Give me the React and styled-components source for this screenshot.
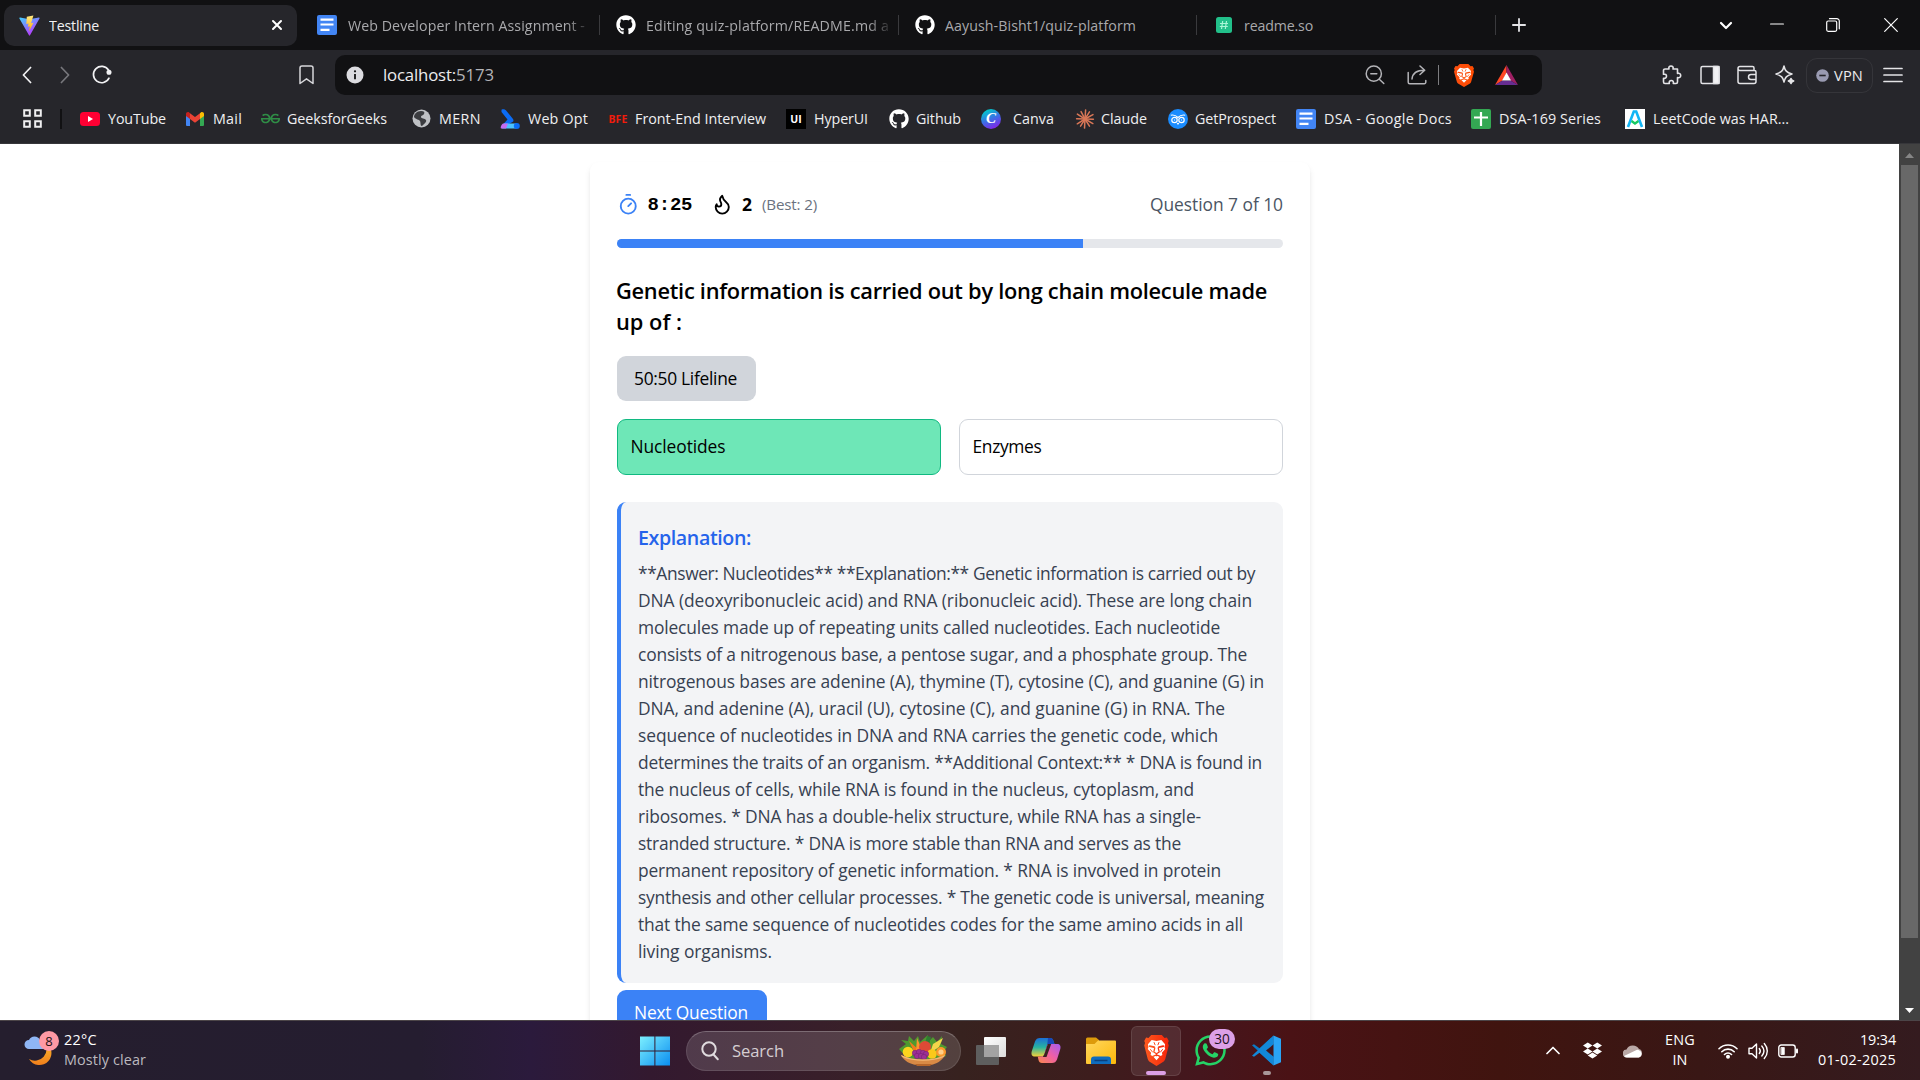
import React, { useLayoutEffect, useRef } from 'react';
import styled, { createGlobalStyle } from 'styled-components';
import { FaGithub, FaDropbox, FaWhatsapp } from 'react-icons/fa';
import { SiGeeksforgeeks } from 'react-icons/si';

const Global = createGlobalStyle`
  *, *::before, *::after { box-sizing: border-box; }
  html, body { margin: 0; padding: 0; overflow: hidden; }
  body { font-family: "Open Sans", "Noto Sans", sans-serif; background: #fff; }
  button { font: inherit; border: 0; cursor: pointer; }
  svg { display: block; flex: none; }
`;

/* ---------- text of a known width ---------- */

const FitBox = styled.span`
  display: block;
  flex: none;
  white-space: nowrap;
`;
const FitInner = styled.span`
  display: inline-block;
  white-space: pre;
`;

function Fit({ w, children }) {
  const box = useRef(null);
  const inner = useRef(null);
  useLayoutEffect(() => {
    const el = inner.current;
    el.style.letterSpacing = '0px';
    const natural = el.getBoundingClientRect().width;
    const n = Math.max(1, el.textContent.length);
    el.style.letterSpacing = `${(w - natural) / n}px`;
    box.current.style.width = `${w}px`;
  }, [w, children]);
  return (
    <FitBox ref={box}>
      <FitInner ref={inner}>{children}</FitInner>
    </FitBox>
  );
}

/* ---------- frame ---------- */

const Screen = styled.div`
  width: 1920px;
  height: 1080px;
  display: flex;
  flex-direction: column;
  overflow: hidden;
`;

/* ---------- tab strip ---------- */

const TabStrip = styled.div`
  height: 50px;
  background: #111113;
  display: flex;
  align-items: center;
  flex: none;
`;
const Tab = styled.div`
  width: ${(p) => p.$w}px;
  margin-left: ${(p) => p.$ml || 0}px;
  height: 41px;
  padding-left: ${(p) => p.$pl}px;
  display: flex;
  align-items: center;
  flex: none;
  border-radius: 10px;
  background: ${(p) => (p.$active ? '#26262b' : 'transparent')};
  color: ${(p) => (p.$active ? '#f1f1f3' : '#a9a9ac')};
  font-size: 14.2px;
`;
const TabTitle = styled.div`
  margin-left: ${(p) => p.$ml}px;
  width: ${(p) => p.$w}px;
  overflow: hidden;
  flex: none;
  ${(p) => p.$fade && 'mask-image: linear-gradient(90deg, #000 91%, rgba(0, 0, 0, 0.15) 100%);'}
`;
const TabClose = styled.div`
  margin-left: auto;
  margin-right: 14px;
`;
const TabDivider = styled.div`
  width: 1px;
  height: 20px;
  background: #3a3a3d;
  flex: none;
`;
const NewTab = styled.div`
  width: 46px;
  display: grid;
  place-items: center;
`;
const WindowButtons = styled.div`
  margin-left: auto;
  display: flex;
  align-items: center;
`;
const WindowButton = styled.div`
  width: ${(p) => p.$w}px;
  height: 48px;
  display: grid;
  place-items: center;
`;

/* ---------- toolbar ---------- */

const Toolbar = styled.div`
  height: 50px;
  background: #26262b;
  display: flex;
  align-items: center;
  flex: none;
`;
const Tool = styled.div`
  width: ${(p) => p.$w}px;
  margin-left: ${(p) => p.$ml || 0}px;
  height: 40px;
  display: grid;
  place-items: center;
  flex: none;
`;
const UrlBar = styled.div`
  width: 1207px;
  height: 40px;
  margin-left: 9px;
  border-radius: 10px;
  background: #111113;
  color: #ececee;
  font-size: 16.8px;
  display: flex;
  align-items: center;
  padding-left: 11px;
  flex: none;
`;
const UrlText = styled.div`
  display: flex;
  margin-left: 19px;
  padding-bottom: 1px;
`;
const Port = styled.span`
  color: #b4b4b8;
`;
const UrlDivider = styled.div`
  width: 1px;
  height: 20px;
  background: #7d7d80;
`;
const VpnButton = styled.div`
  width: 67px;
  height: 35px;
  margin-left: 3px;
  border: 1px solid #35353a;
  border-radius: 11px;
  display: flex;
  align-items: center;
  padding-left: 9px;
  gap: 5px;
  color: #ececee;
  font-size: 14.6px;
  flex: none;
`;

/* ---------- bookmarks ---------- */

const BookmarkBar = styled.div`
  height: 44px;
  background: #26262b;
  border-bottom: 1px solid #36363a;
  display: flex;
  align-items: center;
  padding: 0 0 6px 23px;
  flex: none;
  color: #efeff1;
  font-size: 14.3px;
`;
const BarDivider = styled.div`
  width: 2px;
  height: 20px;
  margin-left: 18px;
  background: #111113;
`;
const Bookmark = styled.div`
  display: flex;
  align-items: center;
  margin-left: ${(p) => p.$ml}px;
  gap: ${(p) => p.$gap}px;
  flex: none;
`;
const Glyph = styled.div`
  width: ${(p) => p.$w}px;
  height: 20px;
  display: grid;
  place-items: center;
  flex: none;
`;
const BfeMark = styled.span`
  color: #f01c0c;
  font: 700 10.5px/20px "Noto Sans", sans-serif;
`;
const UiMark = styled.span`
  width: 20px;
  height: 20px;
  background: #000;
  color: #fff;
  font-size: 10.5px;
  font-weight: 700;
  line-height: 20px;
  text-align: center;
`;
const CanvaMark = styled.span`
  width: 20px;
  height: 20px;
  border-radius: 50%;
  background: linear-gradient(155deg, #05c3cc 15%, #3b6fe6 50%, #7d2ae8 85%);
  color: #fff;
  font: italic 700 15px/19px "Liberation Serif", serif;
  text-align: center;
`;

/* ---------- page ---------- */

const Page = styled.div`
  height: 876px;
  display: flex;
  background: #fff;
  overflow: hidden;
  flex: none;
`;
const Viewport = styled.main`
  flex: 1;
  display: flex;
  justify-content: center;
  align-items: flex-start;
  padding-top: 18px;
  overflow: hidden;
`;
const Card = styled.section`
  width: 720px;
  height: 940px;
  flex: none;
  margin-left: 1px;
  padding: 27px;
  border-radius: 9px;
  background: #fff;
  box-shadow: 0 4.5px 7px -1px rgba(0, 0, 0, 0.1), 0 2px 4.5px -2px rgba(0, 0, 0, 0.1);
  color: #000;
  font-size: 17.4px;
  line-height: 27px;
`;
const StatusRow = styled.div`
  height: 31px;
  display: flex;
  align-items: center;
  color: #4b5563;
`;
const Timer = styled.span`
  margin-left: 8px;
  width: 45px;
  padding-top: 2px;
  color: #000;
  font: 700 19px/27px "Liberation Mono", monospace;
  letter-spacing: -0.2px;
`;
const FlameSlot = styled.div`
  margin-left: 18px;
`;
const Streak = styled.span`
  margin-left: 9px;
  width: 20px;
  color: #000;
  font-weight: 700;
  font-size: 17.5px;
`;
const Best = styled.div`
  color: #6b7280;
  font-size: 15.2px;
`;
const Count = styled.div`
  margin-left: auto;
`;
const Track = styled.div`
  margin-top: 19px;
  height: 9px;
  border-radius: 5px;
  background: #e5e7eb;
  overflow: hidden;
`;
const Fill = styled.div`
  width: 70%;
  height: 100%;
  background: #3b82f6;
`;
const Question = styled.h2`
  margin: 27px 0 19px -1px;
  font-size: 21.8px;
  line-height: 31px;
  font-weight: 600;
`;
const Lifeline = styled.button`
  display: block;
  height: 45px;
  padding: 0 19px 0 17px;
  border-radius: 9px;
  background: #d1d5db;
  color: #000;
`;
const Options = styled.div`
  margin-top: 18px;
  display: grid;
  grid-template-columns: 1fr 1fr;
  gap: 18px;
`;
const Option = styled.div`
  height: 56px;
  padding: 12.5px 12.5px;
  border-radius: 9px;
  border: 1px solid ${(p) => (p.$correct ? '#10b981' : '#d1d5db')};
  background: ${(p) => (p.$correct ? '#6ee7b7' : '#fff')};
`;
const Explanation = styled.div`
  margin-top: 27px;
  height: 481px;
  padding: 19px 17px;
  border-left: 4px solid #3b82f6;
  border-radius: 9px;
  background: #f3f4f6;
  color: #374151;
`;
const ExplanationTitle = styled.h3`
  margin: 0 0 6px;
  padding-top: 1px;
  color: #2563eb;
  font-size: 19.6px;
  line-height: 31.5px;
  font-weight: 600;
`;
const NextButton = styled.button`
  display: block;
  margin-top: 7px;
  width: 150px;
  height: 45px;
  padding: 0 0 0 17px;
  text-align: left;
  border-radius: 9px;
  background: #3b82f6;
  color: #fff;
  font-weight: 500;
`;

const Scrollbar = styled.div`
  width: 21px;
  background: #424242;
  display: flex;
  flex-direction: column;
  align-items: center;
  padding: 9px 0 7px;
  justify-content: space-between;
`;
const Thumb = styled.div`
  width: 17px;
  height: 773px;
  background: #686868;
  margin: 7px 0 auto;
`;

/* ---------- taskbar ---------- */

const Taskbar = styled.div`
  height: 60px;
  border-top: 1px solid #4c4548;
  display: flex;
  align-items: center;
  flex: none;
  color: #fff;
  font-size: 14.4px;
  line-height: 20px;
  background: linear-gradient(
    90deg,
    #251e2e 0,
    #251d30 420px,
    #2b1a3c 530px,
    #33192f 650px,
    #392029 850px,
    #37221f 960px,
    #3d1d1d 1090px,
    #45161d 1200px,
    #4a1215 1290px,
    #40140f 1500px,
    #391715 1700px,
    #341b1f 1920px
  );
`;
const Weather = styled.div`
  position: relative;
  width: 31px;
  height: 37px;
  margin-left: 24px;
  margin-bottom: 3px;
`;
const WeatherBadge = styled.span`
  position: absolute;
  right: -4px;
  top: 0;
  width: 20px;
  height: 20px;
  border-radius: 50%;
  background: #ff99a4;
  color: #1b1113;
  font-size: 13px;
  text-align: center;
`;
const WeatherText = styled.div`
  margin-left: 9px;
  width: 90px;
  padding-bottom: 2px;
`;
const Muted = styled.div`
  color: #bcb9bf;
`;
const Slot = styled.div`
  width: ${(p) => p.$w}px;
  height: ${(p) => p.$h || 31}px;
  margin-left: ${(p) => p.$ml}px;
  display: flex;
  align-items: center;
  justify-content: center;
  position: relative;
  flex: none;
`;
const SearchBox = styled.div`
  width: 275px;
  height: 40px;
  margin-left: 16px;
  border-radius: 20px;
  background: rgba(255, 255, 255, 0.14);
  border: 1px solid rgba(255, 255, 255, 0.1);
  border-top-color: rgba(255, 255, 255, 0.24);
  display: flex;
  align-items: center;
  padding-left: 13px;
  color: #d5ced2;
  font-size: 16.6px;
  flex: none;
`;
const SearchText = styled.div`
  margin-left: 12px;
  width: 166px;
`;
const ActiveApp = styled.div`
  width: 50px;
  height: 50px;
  margin-left: 15px;
  border-radius: 6px;
  border: 1px solid rgba(255, 255, 255, 0.1);
  background: rgba(255, 255, 255, 0.09);
  position: relative;
  display: grid;
  place-items: center;
  flex: none;
`;
const RunMark = styled.span`
  position: absolute;
  bottom: ${(p) => p.$b}px;
  left: 50%;
  transform: translateX(-50%);
  width: ${(p) => p.$w}px;
  height: 4px;
  border-radius: 2px;
  background: ${(p) => p.$c};
`;
const CountBadge = styled.span`
  position: absolute;
  left: 14px;
  top: -6px;
  width: 26px;
  height: 20px;
  border-radius: 10px;
  background: #dca0e6;
  color: #1d1220;
  font-size: 13.6px;
  text-align: center;
`;
const Lang = styled.div`
  width: 40px;
  margin-left: 17px;
  margin-right: 1px;
  padding-bottom: 1px;
  display: flex;
  flex-direction: column;
  align-items: center;
`;
const Clock = styled.div`
  margin-left: auto;
  margin-right: 24px;
  padding-bottom: 2px;
  display: flex;
  flex-direction: column;
  align-items: flex-end;
`;

/* ---------- drawings ---------- */

const Line = ({ size = 20, w = size, h = size, vb = '0 0 20 20', color = '#e4e4e7', sw = 1.5, children }) => (
  <svg width={w} height={h} viewBox={vb} fill="none" stroke={color} strokeWidth={sw} strokeLinecap="round" strokeLinejoin="round">
    {children}
  </svg>
);

const ViteIcon = () => (
  <svg width="21" height="21" viewBox="0 0 21 21">
    <defs>
      <linearGradient id="va" x1="0" y1="0" x2="0.6" y2="1">
        <stop offset="0" stopColor="#41d1ff" />
        <stop offset="1" stopColor="#bd34fe" />
      </linearGradient>
      <linearGradient id="vb" x1="0.5" y1="0" x2="0.5" y2="1">
        <stop offset="0" stopColor="#ffea83" />
        <stop offset="1" stopColor="#ffa800" />
      </linearGradient>
    </defs>
    <path d="M20.5 3.4 11 20.3a.6.6 0 0 1-1 0L.4 3.4c-.2-.4.1-.9.6-.8l9.5 1.7 9.4-1.7c.5-.1.8.4.6.8Z" fill="url(#va)" />
    <path d="m14.400.5-6.600 1.300-.5 7.200 2.200-.4-.6 3.200 2-.5-1 5.300 4.600-8.800-2.400.4 2.300-7.700Z" fill="url(#vb)" />
  </svg>
);

const DocIcon = () => (
  <svg width="20" height="20" viewBox="0 0 20 20">
    <rect width="20" height="20" rx="2" fill="#4285f4" />
    <path d="M3.5 4.7h13M3.5 9.5h13M3.5 14.8h9" stroke="#fff" strokeWidth="2.2" />
  </svg>
);

const BraveIcon = ({ w, h, grad }) => (
  <svg width={w} height={h} viewBox="0 0 28 31" preserveAspectRatio="none">
    <defs>
      <linearGradient id={`br${w}`} x1="0" y1="0" x2="1" y2="0">
        <stop offset="0" stopColor={grad ? '#ff5a1f' : '#fb4f10'} />
        <stop offset="1" stopColor={grad ? '#f5240a' : '#ff4b00'} />
      </linearGradient>
    </defs>
    <path
      d="M8.500 0h11l2.800 3 2.500-.4L26.700 6l-.8 2 .8 2.500-3.600 13.500c-.4 1.300-1 2-2 2.700L14 31l-7.100-4.300c-1-.7-1.600-1.400-2-2.700L1.300 10.500 2.100 8l-.8-2 1.900-3.400L5.700 3Z"
      fill={`url(#br${w})`}
    />
    <path
      d="m9 5 5 .9L19 5l3.900 4.300-.6 2.700.8 2-3.500 3.700.5 2.300-2.700 1.600-3.400 3.700-3.400-3.700L7.900 20l.5-2.300L4.900 14l.8-2-.6-2.700Z"
      fill="#fff"
    />
    <g fill="none" stroke={`url(#br${w})`} strokeWidth="1.300" strokeLinecap="round" strokeLinejoin="round">
      <path d="m7 11.200 4.500 1M21 11.200l-4.500 1" strokeWidth="1.800" />
      <path d="m12.200 13-1 4 2.800 1.700 2.800-1.700-1-4M14 18.700v2M10.300 21.400l3.700-1.500 3.700 1.500" />
      <path d="m11.500 7.500 1 2.300M16.500 7.500l-1 2.300M7.800 14.500l2 2.500M20.200 14.500l-2 2.500" strokeWidth="1" />
    </g>
  </svg>
);

const ClaudeIcon = () => (
  <svg width="20" height="20" viewBox="0 0 20 20" stroke="#d97757" strokeWidth="1.5" strokeLinecap="round">
    {[4, 32, 61, 92, 120, 148, 183, 212, 238, 272, 303, 332].map((a, i) => (
      <path key={a} d={`M10 10V${i % 2 ? 1.6 : 0.9}`} transform={`rotate(${a} 10 10)`} />
    ))}
  </svg>
);

const FoodIcon = () => (
  <svg width="50" height="32" viewBox="0 0 50 32">
    <path d="M1 14 8 9 3 5l7 1 1-5 5 5 4-5 2 6 8-7-1 8 6-6 4 5 5-6-1 8 6 3-3 4 2 5-8 3H10Z" fill="#4f9a2f" />
    <path d="m11 6 11 10-4 5Z" fill="#f47a1c" />
    <path d="m19 3 5 12-6 1Z" fill="#ff942d" />
    <path d="m45 3-4 9-9 6 3-9Z" fill="#f3d54b" />
    <path d="m29 1 4 1-2 8-5 2Z" fill="#2f7d32" />
    <circle cx="27" cy="12" r="6" fill="#df4a36" />
    <circle cx="10" cy="17" r="5.3" fill="#fcd51d" />
    <circle cx="34" cy="19" r="4.8" fill="#fbc91a" />
    <circle cx="43" cy="17" r="5" fill="#fb9a2b" />
    <circle cx="43" cy="17" r="2.6" fill="#ffd08a" />
    {[[17, 18], [21, 17], [25, 18], [28, 19], [19, 21], [23, 21], [26, 22]].map(([x, y]) => (
      <circle key={`${x}${y}`} cx={x} cy={y} r="2.7" fill="#9c2f95" stroke="#741f73" strokeWidth=".5" />
    ))}
    <path d="M3 20c12 6 32 6 44 0-3 6-9 9-14 10H18C12 29 6 26 3 20Z" fill="#d98a45" />
    <path d="M3 20c12 6 32 6 44 0l-1 2c-12 5-30 5-42 0Z" fill="#f3b876" />
    <path d="M17 29h17l-2 2H19Z" fill="#b5652a" />
  </svg>
);

const CopilotIcon = () => (
  <svg width="30" height="27" viewBox="0 0 30 27">
    <defs>
      <linearGradient id="cpa" x1="0" y1="0" x2="0" y2="1">
        <stop offset="0" stopColor="#1b6fd8" />
        <stop offset=".5" stopColor="#27b3a0" />
        <stop offset="1" stopColor="#f5d23a" />
      </linearGradient>
      <linearGradient id="cpb" x1="1" y1="0" x2="0" y2="1">
        <stop offset="0" stopColor="#a55cf0" />
        <stop offset=".5" stopColor="#ef5fa5" />
        <stop offset="1" stopColor="#fb8a4a" />
      </linearGradient>
    </defs>
    <path fillRule="evenodd" d="M9 1h10c2 0 3 1 3.500 3l1 3h-5c-2 0-2.500 1-3 3l-2 7c-.6 2-1.500 2.500-3 2.500H4c-3 0-4-2-3.300-5L4 4.500C5 2 6.500 1 9 1Z" fill="url(#cpa)" />
    <path d="M17 1h2c2 0 3 1 3.500 3l1 3h-5c-1 0-1.800.3-2.300 1Z" fill="#1747b8" />
    <path d="M21 26H11c-2 0-3-1-3.500-3l-.8-3.500H10c2 0 3-.8 3.500-2.500l2.200-7.500c.5-2 1.300-2.500 3-2.500H26c3 0 4 2 3.300 5L26 22.500c-1 2.500-2.500 3.500-5 3.500Z" fill="url(#cpb)" />
    <path d="M16.800 7h3.400l-4.700 13h-3.700l1.700-3Z" fill="#3a2220" />
  </svg>
);

const CodeIcon = () => (
  <svg width="31" height="31" viewBox="0 0 31 31">
    <path d="M22.500.5 8.500 13.300 3 9.200 1 10.300l21.500 20Z" fill="#0a78c4" />
    <path d="M22.500 30.500 8.500 17.700 3 21.800l-2-1.100L22.500.7Z" fill="#1288d8" />
    <path d="m15 15.500 8-6.500v13Z" fill="#43161b" />
    <path d="M22.500.5 30 3.800v23.400l-7.500 3.300Z" fill="#2aa4f4" />
  </svg>
);

/* ---------- data ---------- */

const bookmarks = [
  { ml: 18, w: 20, gap: 8, tw: 58, text: 'YouTube', icon: (
    <svg width="20" height="14" viewBox="0 0 20 14"><rect width="20" height="14" rx="3.500" fill="#ff0033" /><path d="m8 4 5 3-5 3Z" fill="#fff" /></svg>
  ) },
  { ml: 20, w: 18, gap: 9, tw: 29, text: 'Mail', icon: (
    <svg width="18" height="14" viewBox="0 0 18 14">
      <path d="M0 2v11a1 1 0 0 0 1 1h3V4Z" fill="#4285f4" />
      <path d="M18 2v11a1 1 0 0 1-1 1h-3V4Z" fill="#34a853" />
      <path d="M14 1.300V7l4-3V1.700C18 .3 16-.6 14.800.5Z" fill="#fbbc04" />
      <path d="M4 1.300V7L0 4V1.700C0 .3 2-.6 3.200.5Z" fill="#c5221f" />
      <path d="M4 7V1.200l5 3.800 5-3.800V7l-5 3.700Z" fill="#ea4335" />
    </svg>
  ) },
  { ml: 19, w: 19, gap: 7, tw: 100, text: 'GeeksforGeeks', icon: <SiGeeksforgeeks size={19} color="#2f8d46" /> },
  { ml: 25, w: 19, gap: 8, tw: 42, text: 'MERN', icon: (
    <svg width="19" height="19" viewBox="0 0 19 19">
      <circle cx="9.500" cy="9.500" r="9" fill="#bfc1c5" />
      <path d="M9 2c3 0 4 1 3 3s-3 1-3 3 4 1 5 3-2 4-4 6c-2 0-1-3-2-5s-4-1-6-4c0-3 3-6 7-6Z" fill="#3b3c40" />
    </svg>
  ) },
  { ml: 19, w: 20, gap: 8, tw: 60, text: 'Web Opt', icon: (
    <svg width="20" height="20" viewBox="0 0 20 20">
      <path d="M1.500.8C3-.2 5.500.5 6.500 2L13 10c.8 1.200.6 2.300-.5 3L7 16H2.500L7.500 10.500 1.500 3Z" fill="#0b6cf5" />
      <path d="M4 14.500h12.500v5H2Z" fill="#4cc3ff" /><path d="M1 19.500c-1-1 .5-4 2-5h5l-2 5Z" fill="#c46bf0" />
      <circle cx="16.800" cy="17" r="3" fill="#0b6cf5" />
    </svg>
  ) },
  { ml: 20, w: 20, gap: 7, tw: 131, text: 'Front-End Interview', icon: <BfeMark><Fit w={19}>BFE</Fit></BfeMark> },
  { ml: 20, w: 20, gap: 8, tw: 54, text: 'HyperUI', icon: <UiMark>UI</UiMark> },
  { ml: 21, w: 20, gap: 7, tw: 45, text: 'Github', icon: <FaGithub size={20} color="#fff" /> },
  { ml: 20, w: 20, gap: 12, tw: 41, text: 'Canva', icon: <CanvaMark>C</CanvaMark> },
  { ml: 21, w: 20, gap: 6, tw: 46, text: 'Claude', icon: <ClaudeIcon /> },
  { ml: 21, w: 20, gap: 7, tw: 81, text: 'GetProspect', icon: (
    <svg width="20" height="20" viewBox="0 0 20 20" fill="none" stroke="#fff" strokeWidth="1.200">
      <circle cx="10" cy="10" r="10" fill="#1a8cff" stroke="none" />
      <circle cx="6.500" cy="11" r="2.700" /><circle cx="13.500" cy="11" r="2.700" /><path d="M2.800 6.200c3-.7 5.200.3 7.200 2.300 2-2 4.200-3 7.200-2.300M9.200 14l.8 1 .8-1M6.500 10.500v1M13.500 10.500v1" strokeWidth="1.100" />
    </svg>
  ) },
  { ml: 20, w: 20, gap: 8, tw: 128, text: 'DSA - Google Docs', icon: <DocIcon /> },
  { ml: 19, w: 20, gap: 8, tw: 102, text: 'DSA-169 Series', icon: (
    <svg width="20" height="20" viewBox="0 0 20 20"><rect width="20" height="20" rx="2" fill="#34a853" /><path d="M10 3v14M3 8.500h14" stroke="#fff" strokeWidth="2.200" /></svg>
  ) },
  { ml: 24, w: 20, gap: 8, tw: 136, text: 'LeetCode was HAR...', icon: (
    <svg width="20" height="20" viewBox="0 0 20 20"><rect width="20" height="20" fill="#fff" /><path d="M3 18 8.800 2.500h2.400L17 18" fill="none" stroke="#12b5f5" strokeWidth="2.600" /><path d="m6.500 12 3.500 2.500 3.500-2.500" fill="none" stroke="#18c964" strokeWidth="2.400" /></svg>
  ) },
];

const explanation = [
  ['**Answer: Nucleotides** **Explanation:** Genetic information is carried out by', 617],
  ['DNA (deoxyribonucleic acid) and RNA (ribonucleic acid). These are long chain', 614],
  ['molecules made up of repeating units called nucleotides. Each nucleotide', 582],
  ['consists of a nitrogenous base, a pentose sugar, and a phosphate group. The', 609],
  ['nitrogenous bases are adenine (A), thymine (T), cytosine (C), and guanine (G) in', 626],
  ['DNA, and adenine (A), uracil (U), cytosine (C), and guanine (G) in RNA. The', 587],
  ['sequence of nucleotides in DNA and RNA carries the genetic code, which', 580],
  ['determines the traits of an organism. **Additional Context:** * DNA is found in', 624],
  ['the nucleus of cells, while RNA is found in the nucleus, cytoplasm, and', 556],
  ['ribosomes. * DNA has a double-helix structure, while RNA has a single-', 563],
  ['stranded structure. * DNA is more stable than RNA and serves as the', 543],
  ['permanent repository of genetic information. * RNA is involved in protein', 583],
  ['synthesis and other cellular processes. * The genetic code is universal, meaning', 626],
  ['that the same sequence of nucleotides codes for the same amino acids in all', 605],
  ['living organisms.', 134],
];

/* ---------- sections ---------- */

function Tabs() {
  return (
    <TabStrip>
      <Tab $w={293} $ml={4} $pl={15} $active>
        <ViteIcon />
        <TabTitle $ml={9} $w={160}><Fit w={50}>Testline</Fit></TabTitle>
        <TabClose>
          <Line size={12} vb="0 0 12 12" color="#fff" sw={2}><path d="m2 2 8 8M10 2l-8 8" /></Line>
        </TabClose>
      </Tab>
      <Tab $w={302} $pl={20}>
        <DocIcon />
        <TabTitle $ml={11} $w={240} $fade><Fit w={237}>Web Developer Intern Assignment -</Fit></TabTitle>
      </Tab>
      <TabDivider />
      <Tab $w={298} $pl={16}>
        <FaGithub size={20} color="#fff" />
        <TabTitle $ml={10} $w={244} $fade><Fit w={243}>Editing quiz-platform/README.md a</Fit></TabTitle>
      </Tab>
      <TabDivider />
      <Tab $w={297} $pl={16}>
        <FaGithub size={20} color="#fff" />
        <TabTitle $ml={10} $w={238}><Fit w={191}>Aayush-Bisht1/quiz-platform</Fit></TabTitle>
      </Tab>
      <TabDivider />
      <Tab $w={298} $pl={19}>
        <svg width="16" height="16" viewBox="0 0 16 16">
          <rect width="16" height="16" rx="2.500" fill="#22c08a" />
          <path d="M6.700 4 5.500 12M10.500 4 9.300 12M4 6.500h8M3.800 9.500h8" stroke="#a8f5d6" strokeWidth="1.200" />
        </svg>
        <TabTitle $ml={12} $w={200}><Fit w={69}>readme.so</Fit></TabTitle>
      </Tab>
      <TabDivider />
      <NewTab>
        <Line size={14} vb="0 0 14 14" sw={1.8}><path d="M7 .9v12.200M.9 7h12.200" /></Line>
      </NewTab>
      <WindowButtons>
        <WindowButton $w={46}><Line w={14} h={9} vb="0 0 14 9" color="#fff" sw={2.2}><path d="m2 2 5 5 5-5" /></Line></WindowButton>
        <WindowButton $w={56}><Line size={14} vb="0 0 14 14" color="#fff" sw={1.2}><path d="M.6 6h12.800" /></Line></WindowButton>
        <WindowButton $w={56}>
          <Line size={14} vb="0 0 14 14" color="#fff" sw={1.2}><rect x=".7" y="3" width="10" height="10.300" rx="1.500" /><path d="M3.500.7h7.300a2.500 2.500 0 0 1 2.500 2.500v7.600" /></Line>
        </WindowButton>
        <WindowButton $w={59}><Line size={14} vb="0 0 14 14" color="#fff" sw={1.2}><path d="m.7.7 12.600 12.600M13.300.7.7 13.300" /></Line></WindowButton>
      </WindowButtons>
    </TabStrip>
  );
}

function Tools() {
  return (
    <Toolbar>
      <Tool $w={38} $ml={8}><Line w={10} h={18} vb="0 0 10 18" color="#f2f2f4" sw={1.7}><path d="M8.600 1.500 1.400 9l7.200 7.500" /></Line></Tool>
      <Tool $w={38}><Line w={10} h={18} vb="0 0 10 18" color="#77777c" sw={1.7}><path d="M1.400 1.500 8.600 9l-7.200 7.500" /></Line></Tool>
      <Tool $w={35}>
        <Line size={20} color="#f2f2f4" sw={1.7}><path d="M17 13.200A8.200 8.200 0 1 1 16.500 5" /><circle cx="17" cy="7.300" r="1.700" fill="#f2f2f4" /></Line>
      </Tool>
      <Tool $w={40} $ml={167}><Line w={15} h={20} vb="0 0 15 20" color="#d6d6da" sw={1.5}><path d="M1 3a2 2 0 0 1 2-2h9a2 2 0 0 1 2 2v15.500l-6.500-4.700L1 18.500Z" /></Line></Tool>
      <UrlBar>
        <svg width="18" height="18" viewBox="0 0 18 18">
          <circle cx="9" cy="9" r="8.500" fill="#dcdce0" /><path d="M9 8v5.200" stroke="#111" strokeWidth="1.800" /><circle cx="9" cy="5.300" r="1.100" fill="#111" />
        </svg>
        <UrlText><Fit w={73}>localhost:</Fit><Port><Fit w={38}>5173</Fit></Port></UrlText>
        <Tool $w={40} $ml={861}>
          <Line size={20} color="#b4b4b8" sw={1.5}><circle cx="8.800" cy="8.700" r="7.600" /><path d="m14.300 14.200 4.500 4.300M5.800 8.700h6" /></Line>
        </Tool>
        <Tool $w={42} $ml={1}>
          <Line size={20} color="#b4b4b8" sw={1.5}><path d="M1.200 7.500v9.700a1.500 1.500 0 0 0 1.500 1.500h14.600a1.500 1.500 0 0 0 1.500-1.500v-1.700M5 14c.5-5.500 4.500-8.800 12.500-8.800M13 1l4.700 4.200-4.700 4.300" /></Line>
        </Tool>
        <UrlDivider />
        <Tool $w={46} $ml={2}><BraveIcon w={22} h={23} /></Tool>
        <Tool $w={38}>
          <svg width="23" height="20" viewBox="0 0 23 20">
            <path d="M11.500 0 0 20l7.500-4.500 4-7.500Z" fill="#ff4724" /><path d="M11.500 0 23 20l-7.500-4.500-4-7.500Z" fill="#9e1f63" />
            <path d="m0 20 7.500-4.500h8L23 20Z" fill="#662d91" /><path d="M11.500 7.500 16 15.500H7Z" fill="#fff" />
          </svg>
        </Tool>
      </UrlBar>
      <Tool $w={38} $ml={111}>
        <Line size={20} sw={1.6}><path d="M3 4h4c-.6-1.800.4-3 2-3s2.600 1.200 2 3h4.500v4.500c1.800-.6 3.200.4 3.200 2s-1.400 2.600-3.200 2V17a1.500 1.500 0 0 1-1.500 1.500h-2.700c.5-2-.5-3-2-3s-2.500 1-2 3H3A1.500 1.500 0 0 1 1.500 17v-3.700c2 .4 3-.7 3-2.200S3.500 9 1.500 9.300V5.500A1.500 1.500 0 0 1 3 4Z" /></Line>
      </Tool>
      <Tool $w={38}><Line size={20} sw={1.5}><rect x="1" y="1.500" width="18" height="17" rx="1.500" /><path d="M13.500 1.500H19v17h-5.500Z" fill="#f2f2f4" /></Line></Tool>
      <Tool $w={36}>
        <Line size={20} sw={1.5}><path d="M17 5V3a1.500 1.500 0 0 0-1.500-1.500H3a2 2 0 0 0 0 4h14.500A1.500 1.500 0 0 1 19 7v9.500a2 2 0 0 1-2 2H3a2 2 0 0 1-2-2v-13M19 9.500h-5a2.500 2.500 0 0 0 0 5h5" /></Line>
      </Tool>
      <Tool $w={37} $ml={1}>
        <Line size={20} sw={1.5}><path d="M9 1c1 4.700 2.500 6.300 8 8-5.500 1.700-7 3.300-8 8-1-4.700-2.500-6.300-8-8 5.500-1.700 7-3.300 8-8Z" /><path d="M16 13.500c.4 1.600 1 2 2.700 2.500-1.700.5-2.300.9-2.700 2.500-.4-1.600-1-2-2.700-2.500 1.700-.5 2.300-.9 2.700-2.500Z" fill="#f2f2f4" /></Line>
      </Tool>
      <VpnButton>
        <svg width="13" height="13" viewBox="0 0 13 13"><circle cx="6.500" cy="6.500" r="6.300" fill="#9a9bb2" /><path d="M3.300 6.500h6.400" stroke="#26262b" strokeWidth="1.600" /></svg>
        <Fit w={29}>VPN</Fit>
      </VpnButton>
      <Tool $w={40} $ml={0}><Line w={20} h={16} vb="0 0 20 16" sw={1.7}><path d="M1 1.500h18M1 8h18M1 14.500h18" /></Line></Tool>
    </Toolbar>
  );
}

function Bookmarks() {
  return (
    <BookmarkBar>
      <Line size={19} vb="0 0 19 19" color="#efeff1" sw={2}>
        <path d="M1.200 1.200h5.600v5.600H1.200ZM12.200 1.200h5.600v5.600h-5.600ZM1.200 12.200h5.600v5.600H1.200ZM12.200 12.200h5.600v5.600h-5.600Z" strokeLinejoin="miter" />
      </Line>
      <BarDivider />
      {bookmarks.map((b) => (
        <Bookmark key={b.text} $ml={b.ml} $gap={b.gap}>
          <Glyph $w={b.w}>{b.icon}</Glyph>
          <Fit w={b.tw}>{b.text}</Fit>
        </Bookmark>
      ))}
    </BookmarkBar>
  );
}

function Quiz() {
  return (
    <Card>
      <StatusRow>
        <Line size={22.5} vb="0 0 24 24" color="#3b82f6" sw={2}><path d="M10 2h4M12 14l3-3" /><circle cx="12" cy="14" r="8" /></Line>
        <Timer>8:25</Timer>
        <FlameSlot>
          <Line size={22.5} vb="0 0 24 24" color="#000" sw={2}>
            <path d="M8.500 14.500A2.500 2.500 0 0 0 11 12c0-1.380-.5-2-1-3-1.072-2.143-.224-4.054 2-6 .5 2.500 2 4.900 4 6.500 2 1.600 3 3.500 3 5.500a7 7 0 1 1-14 0c0-1.153.433-2.294 1-3a2.500 2.500 0 0 0 2.500 2.500z" />
          </Line>
        </FlameSlot>
        <Streak>2</Streak>
        <Best><Fit w={55}>(Best: 2)</Fit></Best>
        <Count><Fit w={133}>Question 7 of 10</Fit></Count>
      </StatusRow>
      <Track><Fill /></Track>
      <Question>
        <Fit w={651}>Genetic information is carried out by long chain molecule made</Fit>
        <Fit w={66}>up of :</Fit>
      </Question>
      <Lifeline><Fit w={103}>50:50 Lifeline</Fit></Lifeline>
      <Options>
        <Option $correct><Fit w={95}>Nucleotides</Fit></Option>
        <Option><Fit w={69}>Enzymes</Fit></Option>
      </Options>
      <Explanation>
        <ExplanationTitle><Fit w={113}>Explanation:</Fit></ExplanationTitle>
        {explanation.map(([text, w]) => <Fit key={text} w={w}>{text}</Fit>)}
      </Explanation>
      <NextButton><Fit w={114}>Next Question</Fit></NextButton>
    </Card>
  );
}

function Dock() {
  return (
    <Taskbar>
      <Weather>
        <svg width="31" height="37" viewBox="0 0 31 37">
          <defs><linearGradient id="mo" x1="0" y1="0" x2="0" y2="1"><stop offset="0" stopColor="#fbbb2c" /><stop offset="1" stopColor="#f07f1c" /></linearGradient></defs>
          <path d="M20 12a12 12 0 1 1-15 17 11.500 11.500 0 0 0 15-17Z" transform="translate(0 -1)" fill="url(#mo)" />
          <path d="M5 18a4.500 4.500 0 0 1 0-9 6 6 0 0 1 11 0 4.500 4.500 0 0 1 3 9Z" fill="#8fb6f5" />
        </svg>
        <WeatherBadge>8</WeatherBadge>
      </Weather>
      <WeatherText>
        <Fit w={33}>22°C</Fit>
        <Muted><Fit w={82}>Mostly clear</Fit></Muted>
      </WeatherText>
      <Slot $w={30} $ml={486}>
        <svg width="30" height="30" viewBox="0 0 30 30">
          <defs><linearGradient id="wn" gradientUnits="userSpaceOnUse" x1="0" y1="0" x2="30" y2="30"><stop offset="0" stopColor="#7df0ff" /><stop offset="1" stopColor="#0a8df0" /></linearGradient></defs>
          <path d="M0 .5h14.400v14H0ZM15.400.5H30v14H15.400ZM0 15.500h14.400v14H0ZM15.400 15.500H30v14H15.400Z" fill="url(#wn)" />
        </svg>
      </Slot>
      <SearchBox>
        <Line size={20} color="#e0dbde" sw={2}><circle cx="9" cy="8" r="6.700" /><path d="m13.500 13.500 4.300 4.700" /></Line>
        <SearchText><Fit w={52}>Search</Fit></SearchText>
        <FoodIcon />
      </SearchBox>
      <Slot $w={30} $ml={15}>
        <svg width="30" height="28" viewBox="0 0 30 28">
          <defs><linearGradient id="tv" x1="0" y1="0" x2="1" y2="1"><stop offset="0" stopColor="#fff" /><stop offset="1" stopColor="#dcdcdc" /></linearGradient></defs>
          <rect y="8" width="23" height="20" rx="1" fill="#5e5e5e" /><rect x="8" width="22" height="20" rx="1" fill="url(#tv)" /><path d="M8 8h15v12H8Z" fill="#a3a3a3" />
        </svg>
      </Slot>
      <Slot $w={30} $ml={25}><CopilotIcon /></Slot>
      <Slot $w={30} $ml={25}>
        <svg width="30" height="27" viewBox="0 0 30 27">
          <defs><linearGradient id="fo" x1="0" y1="0" x2="1" y2="1"><stop offset="0" stopColor="#ffd75e" /><stop offset="1" stopColor="#fcb80a" /></linearGradient></defs>
          <path d="M0 2a1.500 1.500 0 0 1 1.500-1.500H10L13 3v6H0Z" fill="#dd9b0b" />
          <path d="M0 7h8.500L12 3.500h17a1 1 0 0 1 1 1V26a1 1 0 0 1-1 1H1a1 1 0 0 1-1-1Z" fill="url(#fo)" />
          <path d="M5 27v-4.500a3 3 0 0 1 3-3h14a3 3 0 0 1 3 3V27Z" fill="#0f6cbd" /><path d="M8.500 23.500h13" stroke="#0a3f7c" strokeWidth="1.500" />
        </svg>
      </Slot>
      <ActiveApp>
        <BraveIcon w={27} h={31} grad />
        <RunMark $w={20} $b={0} $c="#dca0e6" />
      </ActiveApp>
      <Slot $w={31} $ml={14}>
        <FaWhatsapp size={35} color="#25d366" />
        <CountBadge>30</CountBadge>
      </Slot>
      <Slot $w={31} $ml={25}><CodeIcon /><RunMark $w={8} $b={-9} $c="#a89698" /></Slot>
      <Slot $w={16} $ml={263}><Line w={14} h={9} vb="0 0 14 9" color="#fff" sw={1.7}><path d="m1 7.500 6-6 6 6" /></Line></Slot>
      <Slot $w={20} $ml={21}><FaDropbox size={19} color="#fff" /></Slot>
      <Slot $w={20} $ml={21}>
        <svg width="20" height="14" viewBox="0 0 20 14">
          <path d="M4 13.500A4 4 0 0 1 3.500 5.500 7 7 0 0 1 16 5a4.400 4.400 0 0 1-.5 8.500Z" fill="#b9a8a6" />
          <path d="M1 12 12.500 6.500c1-.6 2-.8 3-.5A4 4 0 0 1 16 13.600H4A4 4 0 0 1 1 12Z" fill="#fff" />
        </svg>
      </Slot>
      <Lang><Fit w={30}>ENG</Fit><Fit w={15}>IN</Fit></Lang>
      <Slot $w={20} $ml={17}>
        <Line w={20} h={16} vb="0 0 20 16" color="#fff" sw={1.6}><path d="M1 5.700a12.800 12.800 0 0 1 18 0M3.800 8.700a8.800 8.800 0 0 1 12.400 0M6.500 11.500a5 5 0 0 1 7 0" /><circle cx="10" cy="13.800" r="1.200" fill="#fff" /></Line>
      </Slot>
      <Slot $w={20} $ml={10}>
        <Line w={20} h={18} vb="0 0 20 18" color="#fff" sw={1.4}><path d="M1 6.300h3L8.500 2v14L4 11.700H1ZM11.300 6.500c1.200 1.500 1.200 3.500 0 5M13.800 4c2.600 3 2.600 7 0 10M16.300 1.500c4 4.500 4 10.500 0 15" /></Line>
      </Slot>
      <Slot $w={20} $ml={10}>
        <Line w={20} h={14} vb="0 0 20 14" color="#fff" sw={1.4}><rect x=".8" y="1" width="16.400" height="12" rx="2.500" /><path d="M19 5.500v3" strokeWidth="2" /><rect x="3.300" y="3.500" width="3" height="7" fill="#fff" strokeWidth=".8" /></Line>
      </Slot>
      <Clock><Fit w={36}>19:34</Fit><Fit w={78}>01-02-2025</Fit></Clock>
    </Taskbar>
  );
}

export default function App() {
  return (
    <Screen>
      <Global />
      <Tabs />
      <Tools />
      <Bookmarks />
      <Page>
        <Viewport><Quiz /></Viewport>
        <Scrollbar>
          <svg width="9" height="5" viewBox="0 0 9 5"><path d="M4.500 0 9 5H0Z" fill="#868686" /></svg>
          <Thumb />
          <svg width="9" height="5" viewBox="0 0 9 5"><path d="M4.500 5 9 0H0Z" fill="#fff" /></svg>
        </Scrollbar>
      </Page>
      <Dock />
    </Screen>
  );
}
